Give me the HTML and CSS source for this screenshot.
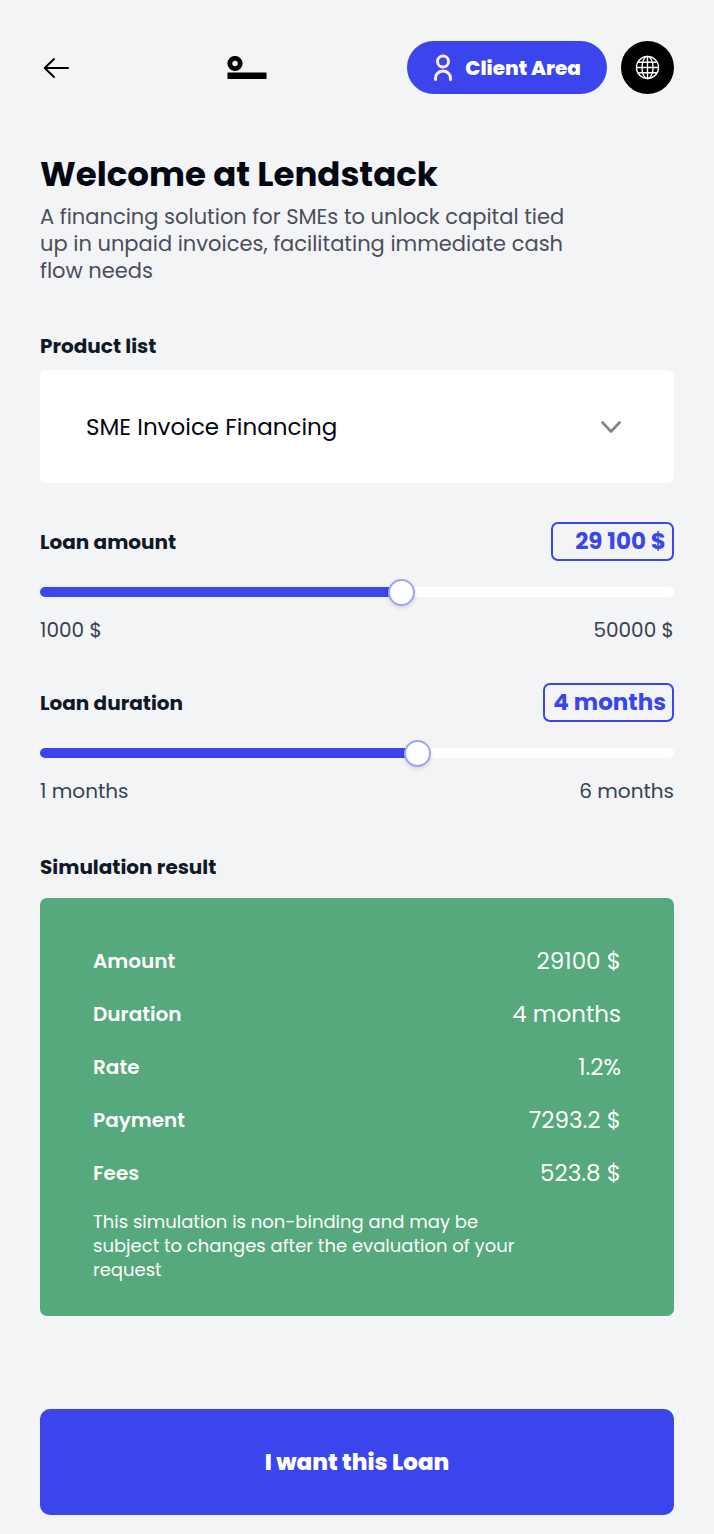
FILE: index.html
```html
<!DOCTYPE html>
<html lang="en">
<head>
<meta charset="utf-8">
<meta name="viewport" content="width=device-width, initial-scale=1">
<title>Lendstack</title>
<link rel="stylesheet" href="styles.css">
</head>
<body>
<main class="page">
  <header class="topbar">
    <button class="back" type="button" aria-label="Back">
      <svg width="32" height="32" viewBox="0 0 32 32" fill="none" stroke="#000" stroke-width="2" stroke-linecap="round" stroke-linejoin="round"><path d="M28 16H5M14 7l-9.300 9 9.300 9"/></svg>
    </button>
    <svg class="logo" width="40" height="24" viewBox="0 0 40 24" role="img" aria-label="Lendstack"><circle cx="8" cy="7.500" r="5.200" fill="none" stroke="#000" stroke-width="4.800"/><path d="M.5 16.500h39V23H.5z" fill="#000"/></svg>
    <div class="actions">
      <button class="client" type="button">
        <svg width="20" height="28" viewBox="0 0 20 28" fill="none" stroke="#fbe9f5" stroke-width="3" stroke-linecap="round"><circle cx="10" cy="7.500" r="5.500"/><path d="M2.500 25.500v-1.500a7.500 7 0 0 1 15 0v1.500"/></svg>
        Client Area
      </button>
      <button class="language" type="button" aria-label="Language">
        <svg width="25" height="25" viewBox="0 0 26 26" fill="none" stroke="#fff" stroke-width="1.400"><circle cx="13" cy="13" r="11.500"/><ellipse cx="13" cy="13" rx="5.800" ry="11.500"/><path d="M13 1.500v23M1.500 13h23M3.500 7.500h19M3.500 18.500h19"/></svg>
      </button>
    </div>
  </header>

  <h1 class="title">Welcome at Lendstack</h1>
  <p class="intro">A financing solution for SMEs to unlock capital tied up in unpaid invoices, facilitating immediate cash flow needs</p>

  <form class="form">
    <div class="product">
      <label class="label" for="product">Product list</label>
      <div class="picker">
        <select id="product" class="select"><option>SME Invoice Financing</option></select>
        <svg class="chevron" width="22" height="14" viewBox="0 0 22 14" fill="none" stroke="#81838d" stroke-width="2.600" stroke-linecap="round" stroke-linejoin="round"><path d="M2.500 2.500 11 11.500l8.500-9"/></svg>
      </div>
    </div>

    <div class="slider">
      <div class="slider-head">
        <label class="label" for="amount">Loan amount</label>
        <input class="value amount" type="text" value="29 100 $" aria-label="Loan amount value">
      </div>
      <input id="amount" class="range" type="range" min="1000" max="50000" step="100" value="29100" style="--fill:57.3%">
      <div class="limits"><span>1000 $</span><span>50000 $</span></div>
    </div>

    <div class="slider">
      <div class="slider-head">
        <label class="label" for="duration">Loan duration</label>
        <input class="value duration" type="text" value="4 months" aria-label="Loan duration value">
      </div>
      <input id="duration" class="range" type="range" min="1" max="6" step="1" value="4" style="--fill:60%">
      <div class="limits"><span>1 months</span><span>6 months</span></div>
    </div>

    <section class="simulation">
      <h2 class="label">Simulation result</h2>
      <div class="result">
        <dl class="rows">
          <div class="row"><dt>Amount</dt><dd>29100 $</dd></div>
          <div class="row"><dt>Duration</dt><dd>4 months</dd></div>
          <div class="row"><dt>Rate</dt><dd>1.2%</dd></div>
          <div class="row"><dt>Payment</dt><dd>7293.2 $</dd></div>
          <div class="row"><dt>Fees</dt><dd>523.8 $</dd></div>
        </dl>
        <p class="note">This simulation is non-binding and may be subject to changes after the evaluation of your request</p>
      </div>
    </section>

    <button class="submit" type="button">I want this Loan</button>
  </form>
</main>
</body>
</html>
```
FILE: styles.css
```css
* { box-sizing: border-box; }
body {
  margin: 0;
  background: #f3f4f6;
  color: #030712;
  font-family: Poppins, Inter, sans-serif;
  font-size: 20px;
}
button, input, select { font: inherit; margin: 0; }
button { border: 0; cursor: pointer; }
h1, h2, p, dl, dd { margin: 0; }
svg { display: block; flex: none; }

.page { padding: 41px 40px 19px; }

.topbar { display: flex; align-items: center; justify-content: space-between; height: 53px; }
.back { padding: 0; background: none; }
.logo { margin-left: 14px; }
.actions { display: flex; gap: 14px; }
.client {
  display: flex;
  align-items: center;
  gap: 12px;
  height: 53px;
  padding: 0 26px;
  border-radius: 27px;
  background: #3b45ee;
  color: #fff;
  font-weight: 800;
}
.language {
  display: grid;
  place-items: center;
  width: 53px;
  height: 53px;
  padding: 0;
  border-radius: 50%;
  background: #000;
}

.title { margin-top: 60px; font-size: 34px; font-weight: 700; line-height: 40px; }
.intro { max-width: 534px; margin-top: 9px; color: #4b4d5c; font-size: 21px; line-height: 27px; }

.form { display: flex; flex-direction: column; margin-top: 47px; }
.label { display: block; color: #111827; font-size: 20px; font-weight: 700; line-height: 30px; }
.picker { display: grid; align-items: center; margin-top: 9px; }
.select {
  grid-area: 1 / 1;
  width: 100%;
  height: 113px;
  padding: 0 46px;
  border: 0;
  border-radius: 7px;
  background: #fff;
  color: #030712;
  font-size: 23px;
  appearance: none;
}
.chevron { grid-area: 1 / 1; justify-self: end; margin-right: 52px; pointer-events: none; }

.slider { margin-top: 39px; }
.slider-head { display: flex; align-items: center; justify-content: space-between; height: 39px; }
.value {
  height: 39px;
  padding: 0 6px 2px;
  border: 2px solid #3b45ee;
  border-radius: 7px;
  background: transparent;
  color: #3b45ee;
  font-size: 23px;
  font-weight: 700;
  text-align: right;
}
.amount { width: 123px; }
.duration { width: 131px; }
.range {
  display: block;
  width: 100%;
  height: 27px;
  margin-top: 17px;
  background: none;
  appearance: none;
}
.range::-webkit-slider-runnable-track {
  height: 10px;
  border-radius: 5px;
  background: linear-gradient(#3b45ee, #3b45ee) 0 0 / var(--fill) 100% no-repeat #fff;
}
.range::-webkit-slider-thumb {
  width: 27px;
  height: 27px;
  margin-top: -8px;
  border: 2px solid #9ea3f6;
  border-radius: 50%;
  background: #fff;
  box-shadow: 0 2px 4px rgba(0, 0, 0, .12);
  appearance: none;
}
.limits { display: flex; justify-content: space-between; margin-top: 11px; color: #374151; line-height: 28px; }

.simulation { margin-top: 47px; }
.result { margin-top: 16px; padding: 36px 53px 34px; border-radius: 7px; background: #56a87d; color: #fff; }
.row { display: flex; align-items: center; justify-content: space-between; height: 53px; }
dt { font-weight: 600; }
dd { font-size: 23px; }
.note { max-width: 440px; margin-top: 11px; font-size: 18px; line-height: 24px; }

.submit {
  height: 106px;
  margin-top: 93px;
  border-radius: 10px;
  background: #3b45ee;
  color: #fff;
  font-size: 23px;
  font-weight: 800;
}
```
